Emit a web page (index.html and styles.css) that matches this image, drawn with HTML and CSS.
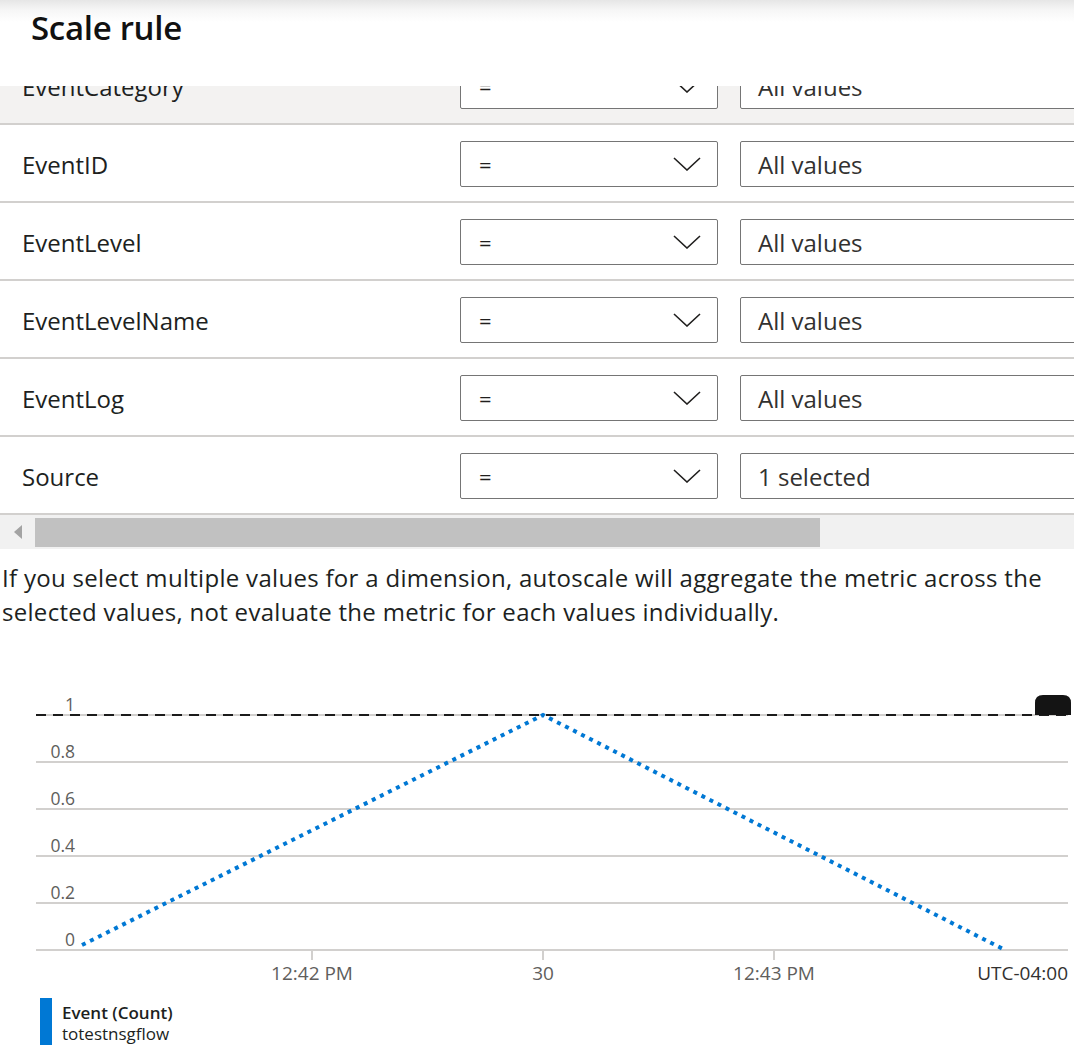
FILE: index.html
```html
<!DOCTYPE html>
<html>
<head>
<meta charset="utf-8">
<link rel="stylesheet" href="styles.css">
</head>
<body>
<div class="page">
  <header class="header">
    <h1 class="title">Scale rule</h1>
  </header>
  <div class="table-viewport">
    <div class="table">
      <div class="row row-hover">
        <div class="label">EventCategory</div>
        <div class="dropdown"><span>=</span><svg class="chev" width="28" height="14" viewBox="0 0 28 14"><path d="M1 1 L14 13 L27 1" fill="none" stroke="#201f1e" stroke-width="1.6"/></svg></div>
        <div class="field">All values</div>
      </div>
      <div class="row">
        <div class="label">EventID</div>
        <div class="dropdown"><span>=</span><svg class="chev" width="28" height="14" viewBox="0 0 28 14"><path d="M1 1 L14 13 L27 1" fill="none" stroke="#201f1e" stroke-width="1.6"/></svg></div>
        <div class="field">All values</div>
      </div>
      <div class="row">
        <div class="label">EventLevel</div>
        <div class="dropdown"><span>=</span><svg class="chev" width="28" height="14" viewBox="0 0 28 14"><path d="M1 1 L14 13 L27 1" fill="none" stroke="#201f1e" stroke-width="1.6"/></svg></div>
        <div class="field">All values</div>
      </div>
      <div class="row">
        <div class="label">EventLevelName</div>
        <div class="dropdown"><span>=</span><svg class="chev" width="28" height="14" viewBox="0 0 28 14"><path d="M1 1 L14 13 L27 1" fill="none" stroke="#201f1e" stroke-width="1.6"/></svg></div>
        <div class="field">All values</div>
      </div>
      <div class="row">
        <div class="label">EventLog</div>
        <div class="dropdown"><span>=</span><svg class="chev" width="28" height="14" viewBox="0 0 28 14"><path d="M1 1 L14 13 L27 1" fill="none" stroke="#201f1e" stroke-width="1.6"/></svg></div>
        <div class="field">All values</div>
      </div>
      <div class="row">
        <div class="label">Source</div>
        <div class="dropdown"><span>=</span><svg class="chev" width="28" height="14" viewBox="0 0 28 14"><path d="M1 1 L14 13 L27 1" fill="none" stroke="#201f1e" stroke-width="1.6"/></svg></div>
        <div class="field">1 selected</div>
      </div>
    </div>
  </div>
  <div class="hscroll">
    <div class="arrow"></div>
    <div class="thumb"></div>
  </div>
  <p class="note">If you select multiple values for a dimension, autoscale will aggregate the metric across the selected values, not evaluate the metric for each values individually.</p>
  <div class="chart">
    <svg width="1074" height="310" viewBox="0 0 1074 310">
      <g stroke="#d2d0ce" stroke-width="2">
        <line x1="36" y1="34" x2="1068" y2="34"/>
        <line x1="36" y1="81" x2="1068" y2="81"/>
        <line x1="36" y1="128" x2="1068" y2="128"/>
        <line x1="36" y1="175" x2="1068" y2="175"/>
        <line x1="36" y1="222" x2="1068" y2="222"/>
        <line x1="36" y1="269" x2="1068" y2="269"/>
        <line x1="312" y1="270" x2="312" y2="279"/>
        <line x1="543" y1="270" x2="543" y2="279"/>
        <line x1="774" y1="270" x2="774" y2="279"/>
      </g>
      <line x1="36" y1="34" x2="1068" y2="34" stroke="#1b1b1b" stroke-width="2" stroke-dasharray="10 7"/>
      <path d="M1035 34 V22 Q1035 14 1043 14 H1063 Q1071 14 1071 22 V34 Z" fill="#141414"/>
      <g class="ylab" text-anchor="end">
        <text x="75" y="30">1</text>
        <text x="75" y="77">0.8</text>
        <text x="75" y="124">0.6</text>
        <text x="75" y="171">0.4</text>
        <text x="75" y="218">0.2</text>
        <text x="75" y="265">0</text>
      </g>
      <polyline points="82,264 543,34 1005,269" fill="none" stroke="#0078d4" stroke-width="4" stroke-dasharray="4 5"/>
      <g class="xlab" text-anchor="middle">
        <text x="312" y="299">12:42 PM</text>
        <text x="543" y="299">30</text>
        <text x="774" y="299">12:43 PM</text>
      </g>
      <text class="tz" x="1068" y="299" text-anchor="end">UTC-04:00</text>
    </svg>
  </div>
  <div class="legend">
    <div class="legend-bar"></div>
    <div class="legend-text">
      <div class="legend-name">Event (Count)</div>
      <div class="legend-sub">totestnsgflow</div>
    </div>
  </div>
</div>
</body>
</html>
```
FILE: styles.css
```css
html, body {
  margin: 0;
  padding: 0;
  background: #ffffff;
}
body {
  font-family: "Open Sans", "Noto Sans", "Liberation Sans", sans-serif;
  color: #201f1e;
  width: 1074px;
  height: 1045px;
  overflow: hidden;
}
.page {
  width: 1074px;
  display: flex;
  flex-direction: column;
}
.header {
  height: 86px;
  background: linear-gradient(#e6e6e6 0px, #f6f6f6 10px, #ffffff 22px);
  display: flex;
  align-items: center;
  position: relative;
  z-index: 2;
}
.title {
  margin: 0 0 0 31px;
  font-size: 33px;
  font-weight: 600;
  color: #111111;
  line-height: 40px;
  position: relative;
  top: -15px;
  letter-spacing: -0.3px;
}
.table-viewport {
  overflow: hidden;
}
.table {
  margin-top: -39px;
  display: flex;
  flex-direction: column;
}
.row {
  height: 76px;
  border-bottom: 2px solid #d2d0ce;
  display: flex;
  align-items: center;
  overflow: hidden;
  background: #ffffff;
}
.row-hover {
  background: #f3f2f1;
}
.label {
  width: 438px;
  padding-left: 22px;
  padding-top: 2px;
  font-size: 24px;
  flex: none;
  color: #201f1e;
}
.dropdown {
  flex: none;
  border: 1px solid #757575;
  border-radius: 2px;
  background: #ffffff;
  display: flex;
  align-items: center;
  justify-content: space-between;
  padding: 0 16px 0 18px;
  box-sizing: border-box;
  width: 258px;
  height: 46px;
  margin-right: 22px;
  font-size: 22px;
  margin-top: 2px;
}
.chev {
  display: block;
}
.field {
  flex: none;
  width: 400px;
  height: 46px;
  box-sizing: border-box;
  border: 1px solid #757575;
  border-radius: 2px;
  background: #ffffff;
  display: flex;
  align-items: center;
  padding-left: 17px;
  padding-top: 1px;
  font-size: 24px;
  color: #323130;
  margin-top: 2px;
}
.hscroll {
  height: 34px;
  background: #f1f1f1;
  display: flex;
  align-items: center;
}
.arrow {
  width: 0;
  height: 0;
  border-top: 7px solid transparent;
  border-bottom: 7px solid transparent;
  border-right: 8px solid #a3a3a3;
  margin-left: 14px;
  margin-right: 13px;
}
.thumb {
  width: 785px;
  height: 29px;
  background: #c1c1c1;
}
.note {
  margin: 12px 0 0 2px;
  font-size: 24px;
  line-height: 34px;
  letter-spacing: 0.3px;
  color: #201f1e;
}
.chart {
  margin-top: 52px;
  height: 310px;
}
.chart svg {
  display: block;
}
.ylab text {
  font-family: "Open Sans", "Noto Sans", sans-serif;
  font-size: 17.5px;
  fill: #605e5c;
}
.xlab text {
  font-family: "Open Sans", "Noto Sans", sans-serif;
  font-size: 19px;
  fill: #605e5c;
}
.tz {
  font-family: "Open Sans", "Noto Sans", sans-serif;
  font-size: 19px;
  fill: #323130;
}
.legend {
  margin-top: 7px;
  display: flex;
  padding-left: 40px;
  gap: 10px;
}
.legend-bar {
  width: 12px;
  height: 50px;
  background: #0078d4;
  flex: none;
}
.legend-text {
  padding-top: 4px;
  font-size: 17px;
  line-height: 21px;
}
.legend-name {
  font-weight: 600;
  color: #201f1e;
}
.legend-sub {
  color: #201f1e;
}
```
